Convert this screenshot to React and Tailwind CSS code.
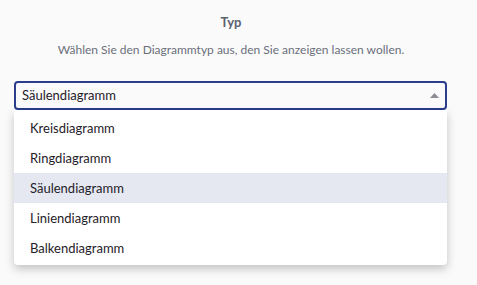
import { useState } from 'react';

const options = ['Kreisdiagramm', 'Ringdiagramm', 'Säulendiagramm', 'Liniendiagramm', 'Balkendiagramm'];

export default function App() {
  const [value, setValue] = useState('Säulendiagramm');

  return (
    <div
      className="w-[477px] h-[285px] bg-[#fafafa] overflow-hidden"
      style={{ fontFamily: 'Lato, "Noto Sans", sans-serif' }}
    >
      {/* Header */}
      <div className="flex flex-col items-center pt-[13px] pr-[15px]">
        <h2 className="text-[13px] leading-[18px] font-bold text-[#5c6170]">Typ</h2>
        <p className="mt-[11px] text-[12px] leading-[16px] text-[#6b6f7a]">
          Wählen Sie den Diagrammtyp aus, den Sie anzeigen lassen wollen.
        </p>
      </div>

      {/* Select */}
      <div className="mx-[14px] mt-[23px] w-[433px]">
        <div className="h-[29px] border-2 border-[#2b3d8b] rounded-[4px] bg-[#fafafa] flex items-center pl-[6px] pr-[6px] pt-[1px]">
          <span className="flex-1 text-[13px] text-[#1f2128]">{value}</span>
          <svg width="9" height="5" viewBox="0 0 9 5" className="mb-[2px]">
            <path d="M4.5 0 L9 5 L0 5 Z" fill="#8a8d94" />
          </svg>
        </div>
        <ul className="bg-white rounded-b-[4px] shadow-[0_4px_10px_rgba(0,0,0,0.22)] pt-[3px] pb-[2px]">
          {options.map((o) => (
            <li
              key={o}
              onClick={() => setValue(o)}
              className={`h-[30px] flex items-center pl-[16px] pt-[2px] text-[13px] text-[#1f2128] ${
                o === value ? 'bg-[#e5e8f1]' : ''
              }`}
            >
              {o}
            </li>
          ))}
        </ul>
      </div>
    </div>
  );
}
